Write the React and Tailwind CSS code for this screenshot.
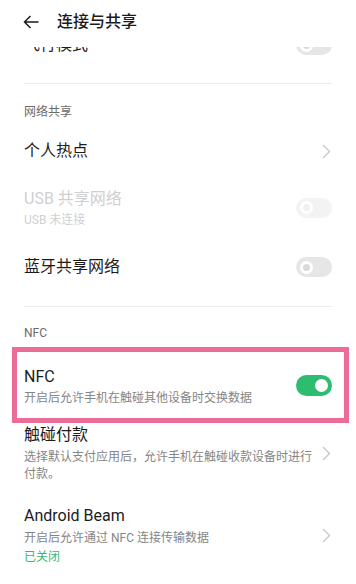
import React from 'react';

// 关闭状态开关
const SwitchOff = ({ disabled }) => (
  <div className={`w-[36px] h-[20px] rounded-full flex items-center px-[4px] shrink-0 ${disabled ? 'bg-[#f3f3f3]' : 'bg-[#e6e6e6]'}`}>
    <div className={`w-[13px] h-[13px] rounded-full border-[3px] border-white ${disabled ? 'bg-[#f0f0f0]' : 'bg-[#dadada]'}`} />
  </div>
);

// 打开状态开关
const SwitchOn = () => (
  <div className="w-[36px] h-[21px] rounded-full bg-[#2dbd70] flex items-center justify-end px-[4px] shrink-0">
    <div className="w-[13px] h-[13px] rounded-full bg-white" />
  </div>
);

const Chevron = () => (
  <svg width="9" height="15" viewBox="0 0 9 15" className="shrink-0">
    <path d="M1 1l6.5 6.5L1 14" fill="none" stroke="#c4c4c4" strokeWidth="1.2" />
  </svg>
);

const Divider = () => <div className="mx-[24px] h-px bg-[#ececec]" />;

export default function App() {
  return (
    <div className="w-[356px] h-[584px] overflow-hidden bg-white text-[#1b1b1b]" style={{ fontFamily: 'Roboto, "Noto Sans CJK SC", sans-serif' }}>
      {/* Header */}
      <div className="h-[47px] pb-[3px] flex items-center pl-[23px]">
        <svg width="16" height="14" viewBox="0 0 16 14">
          <path d="M15.5 7H1.5M7.5 1L1.5 7l6 6" fill="none" stroke="#1b1b1b" strokeWidth="1.5" />
        </svg>
        <span className="ml-[18px] text-[16px] leading-[24px] font-medium">连接与共享</span>
      </div>

      {/* 滚动被遮住的一行 */}
      <div className="h-[9px] overflow-hidden">
        <div className="-mt-[14px] flex items-center justify-between px-[24px]">
          <span className="text-[16px] leading-[24px]">飞行模式</span>
          <SwitchOff />
        </div>
      </div>

      <div className="mt-[27px]"><Divider /></div>

      {/* 网络共享 */}
      <div className="pt-[20px] px-[24px] text-[12px] leading-[16px] text-[#6b6b6b]">网络共享</div>
      <div className="mt-[8px] h-[46px] flex items-center justify-between pl-[24px] pr-[25px]">
        <span className="text-[16px] leading-[24px]">个人热点</span>
        <Chevron />
      </div>
      <div className="h-[67px] flex items-center justify-between px-[24px]">
        <div className="flex flex-col">
          <span className="text-[16px] leading-[24px] text-[#cfcfcf]">USB 共享网络</span>
          <span className="mt-[1px] text-[12px] leading-[16px] text-[#d0d0d0]">USB 未连接</span>
        </div>
        <SwitchOff disabled />
      </div>
      <div className="h-[52px] flex items-center justify-between px-[24px]">
        <span className="text-[16px] leading-[24px]">蓝牙共享网络</span>
        <SwitchOff />
      </div>

      <div className="mt-[13px]"><Divider /></div>

      {/* NFC */}
      <div className="pt-[18px] px-[24px] text-[12px] leading-[16px] text-[#6b6b6b]">NFC</div>
      <div className="mt-[6px] mx-[12px] w-[337px] h-[76px] border-[5px] border-[#ea6c97] flex items-center justify-between pl-[7px] pr-[12px]">
        <div className="flex flex-col pt-[1px]">
          <span className="text-[16px] leading-[24px]">NFC</span>
          <span className="mt-[1px] text-[12px] leading-[16px] text-[#858585]">开启后允许手机在触碰其他设备时交换数据</span>
        </div>
        <SwitchOn />
      </div>

      <div className="flex items-center justify-between pl-[24px] pr-[25px]">
        <div className="flex flex-col">
          <span className="text-[16px] leading-[24px]">触碰付款</span>
          <span className="mt-[2px] w-[292px] text-[12px] leading-[17px] text-[#858585]">
            选择默认支付应用后，允许手机在触碰收款设备时进行<br />付款。
          </span>
        </div>
        <Chevron />
      </div>

      <div className="mt-[21px] flex items-center justify-between pl-[24px] pr-[25px]">
        <div className="flex flex-col">
          <span className="text-[16px] leading-[24px]">Android Beam</span>
          <span className="mt-[1px] text-[12px] leading-[18px] text-[#858585]">开启后允许通过 NFC 连接传输数据</span>
          <span className="mt-[1px] text-[12px] leading-[18px] text-[#35b877]">已关闭</span>
        </div>
        <Chevron />
      </div>
    </div>
  );
}
